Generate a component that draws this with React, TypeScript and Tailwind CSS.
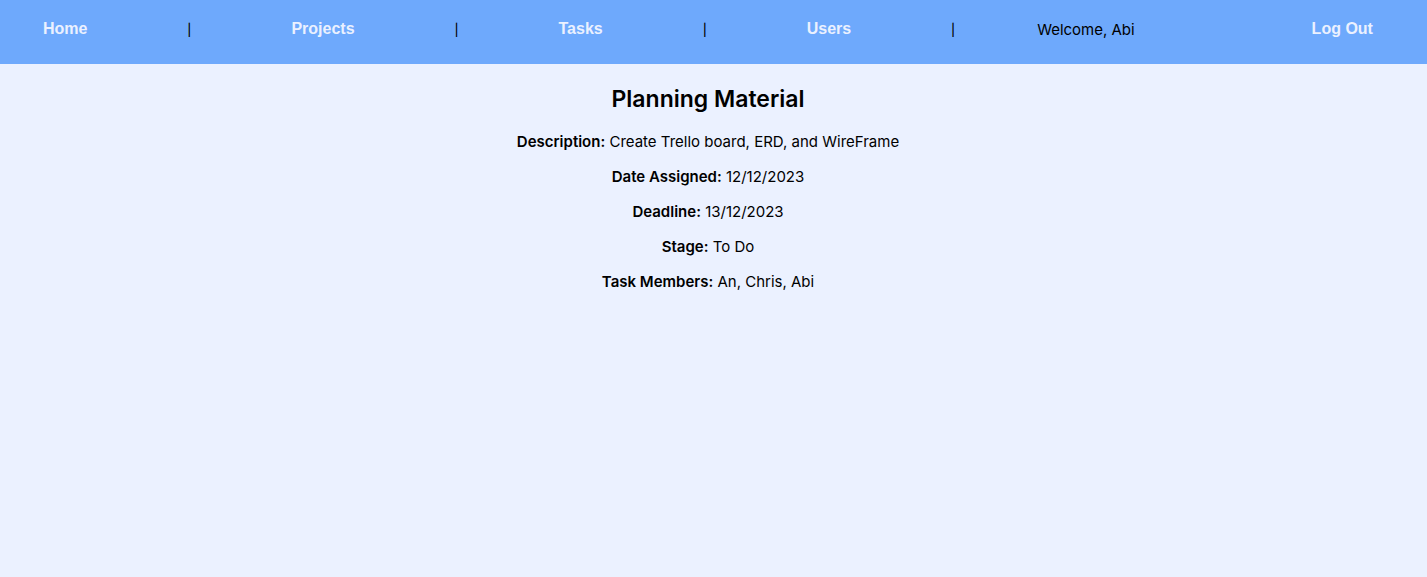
import { Fragment } from "react";

const links = ["Home", "Projects", "Tasks", "Users"];

const details = [
  { label: "Description:", value: "Create Trello board, ERD, and WireFrame" },
  { label: "Date Assigned:", value: "12/12/2023" },
  { label: "Deadline:", value: "13/12/2023" },
  { label: "Stage:", value: "To Do" },
  { label: "Task Members:", value: "An, Chris, Abi" },
];

function NavLink({ label }: { label: string }) {
  return (
    <a
      href={"#" + label.toLowerCase().replace(" ", "-")}
      className="px-[18px] pb-[2px] font-['Liberation_Sans',sans-serif] text-base leading-5 font-bold text-[#ebf1ff]"
    >
      {label}
    </a>
  );
}

export default function App() {
  return (
    <div className="min-h-screen bg-[#ebf1ff] font-[Inter,sans-serif] text-[15px] leading-5 text-black">
      <nav className="flex h-16 items-center justify-between bg-[#6ea9fc] pr-9 pb-1 pl-[25px]">
        {links.map((label) => (
          <Fragment key={label}>
            <NavLink label={label} />
            <span className="text-xs leading-5 font-medium">|</span>
          </Fragment>
        ))}
        <span>Welcome, Abi</span>
        <div className="flex pl-[77px]">
          <NavLink label="Log Out" />
        </div>
      </nav>
      <main className="pt-5 pr-[11px] text-center">
        <h2 className="text-[23px] leading-[30px] font-semibold">Planning Material</h2>
        <div className="flex flex-col gap-[15px] pt-[18px]">
          {details.map(({ label, value }) => (
            <p key={label}>
              <strong className="font-semibold">{label}</strong> {value}
            </p>
          ))}
        </div>
      </main>
    </div>
  );
}
